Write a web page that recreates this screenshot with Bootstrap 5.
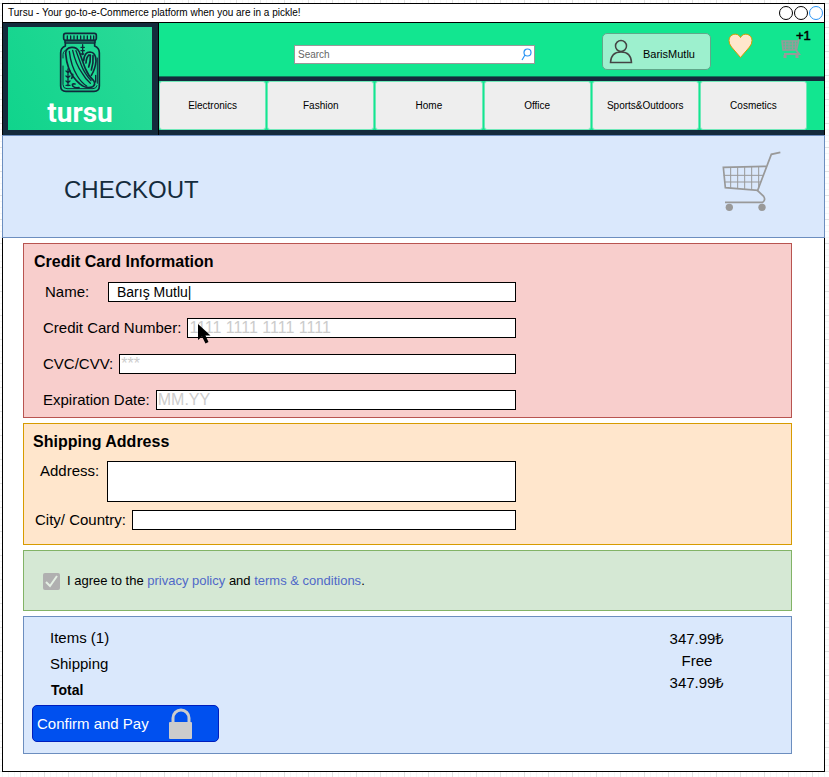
<!DOCTYPE html>
<html lang="en">
<head>
<meta charset="utf-8">
<meta name="viewport" content="width=device-width, initial-scale=1">
<title>Tursu - Checkout</title>
<link href="https://cdn.jsdelivr.net/npm/bootstrap@5.3.0/dist/css/bootstrap.min.css" rel="stylesheet">
<style>
:root { --navy: #142b3c; --mint: #12e690; --sky: #dae8fc; --sky-line: #6c8ebf; }
body {
  font-family: "Liberation Sans", Arial, sans-serif; font-size: 15px; line-height: 20px; color: #000;
  padding: 3px 4px 5px 2px;
  background-color: #fff;
  background-image:
    linear-gradient(#e2e2e2 1px, transparent 1px), linear-gradient(90deg, #e2e2e2 1px, transparent 1px),
    linear-gradient(#f6f6f6 1px, transparent 1px), linear-gradient(90deg, #f6f6f6 1px, transparent 1px);
  background-size: 24px 24px, 24px 24px, 6px 6px, 6px 6px;
  background-position: 20px 3px;
}
svg { display: block; flex: none; }
a { text-decoration: none; }
.window { border: 1px solid #000; background: #fff; }
.titlebar { height: 19px; border-bottom: 1px solid #000; padding: 0 1px 0 5px; }
.titlebar h1 { font-size: 10px; line-height: 18px; margin: 0; font-weight: 400; }
.dots { gap: 1px; }
.dot { width: 14px; height: 14px; border: 1px solid #000; border-radius: 50%; background: #fff; padding: 0; }
.dot-blue { border-color: #2a94f4; }
.masthead { background: var(--navy); }
.brand { width: 156px; padding: 4px 6px 5px 5px; border-right: 1px solid #000; }
.brand-tile { height: 103px; background: linear-gradient(60deg, #10d48c, #2bda98); padding-top: 5px; color: #fff; }
.brand-name { font-family: Roboto, sans-serif; font-weight: 700; font-size: 28px; line-height: 40px; }
.topbar { height: 54px; background: var(--mint); border-bottom: 1px solid #0f7a5c; padding: 10px 8px 0 135px; }
.search { height: 19px; border: 1px solid #999; background: #fff; margin: 12px 67px 0 0; padding: 0 2px 0 3px; }
.search input { font-size: 10px; line-height: 17px; border: 0; padding: 0; outline: 0; background: none; min-width: 0; color: #666; }
.search input::placeholder { color: #666; opacity: 1; }
.search button { border: 0; background: none; padding: 0; }
.account { width: 109px; height: 37px; border: 1px solid #5fa88a; border-radius: 5px; background: #9df0ce; font-size: 11px; padding: 0 0 0 6px; gap: 10px; color: #000; }
.account span { margin-top: 4px; }
.heart { margin-left: 17px; }
.basket { position: relative; margin: 4px 0 0 28px; width: 35px; }
.basket span { position: absolute; left: 15px; top: -9px; font-size: 13px; line-height: 15px; color: #000; -webkit-text-stroke: .5px #000; }
.tabs { background: var(--mint); margin: 4px 0 5px; padding-right: 17px; height: 49px; gap: 1px; }
.tabs a { flex: 1 1 0; background: #eee; border: 1px solid #6fe8b8; border-radius: 3px; font-size: 10px; color: #000; }
.hero { background: var(--sky); border: 1px solid var(--sky-line); margin: 0 -1px; height: 103px; padding: 14px 42px 0 61px; color: var(--navy); }
.hero h2 { font-size: 24px; line-height: 30px; margin: 25px 0 0; font-weight: 400; }
.panels { padding: 5px 32px 17px 20px; gap: 5px; }
.panel { border: 1px solid; }
.panel h3 { font-size: 16px; line-height: 20px; font-weight: 700; margin: 0; }
.panel-pay { background: #f8cecc; border-color: #b85450; padding: 8px 0 7px; }
.panel-pay h3 { padding-left: 10px; }
.panel-ship { background: #ffe6cc; border-color: #d79b00; padding: 8px 0 14px; }
.panel-ship h3 { padding-left: 9px; }
.panel-agree { background: #d5e8d4; border-color: #82b366; padding: 20px 18px 19px; font-size: 13px; }
.panel-sum { background: var(--sky); border-color: var(--sky-line); padding: 8px 0 11px 8px; }
.fields { width: 492px; max-width: 100%; gap: 16px; }
.panel-pay .fields { padding: 10px 0 0 19px; }
.panel-ship .fields { padding: 9px 0 0 11px; gap: 8px; }
.field { gap: 6px; position: relative; }
.field label { white-space: nowrap; }
.label-name { width: 59px; padding-left: 2px; }
.label-address { padding: 0 2px 0 5px; }
.box { flex: 1 1 0; min-width: 0; height: 20px; border: 1px solid #000; background: #fff; padding: 0 1px; font-size: 16px; line-height: 18px; outline: 0; border-radius: 0; resize: none; }
.box::placeholder { color: #ccc; opacity: 1; }
.box-name { font-size: 14px; padding-left: 8px; }
.box-tall { height: 41px; }
.pointer { position: absolute; left: 155px; top: 6px; }
.tick { appearance: none; width: 17px; height: 17px; margin: 0 7px 0 1px; border-radius: 2px; background: #b0b0b0 url("data:image/svg+xml,%3Csvg xmlns='http://www.w3.org/2000/svg' viewBox='0 0 17 17'%3E%3Cpath d='M3 9l4 4 7-10' fill='none' stroke='%23e4f0e3' stroke-width='2'/%3E%3C/svg%3E"); }
.panel-agree a { color: #5068c8; }
.names { line-height: 26px; padding-left: 18px; }
.names strong { font-size: 14px; padding-left: 1px; }
.prices { width: 188px; line-height: 22px; padding-top: 3px; }
.pay { width: 187px; height: 37px; margin-top: 2px; border: 1px solid #001dbc; border-radius: 5px; background: #0050ef; color: #fff; padding: 0 25px 0 4px; }
</style>
<script src="https://cdn.jsdelivr.net/npm/bootstrap@5.3.0/dist/js/bootstrap.bundle.min.js"></script>
</head>
<body>
<div class="window">
  <div class="titlebar d-flex align-items-center justify-content-between">
    <h1>Tursu - Your go-to-e-Commerce platform when you are in a pickle!</h1>
    <div class="dots d-flex">
      <button class="dot" type="button" aria-label="Minimize"></button>
      <button class="dot" type="button" aria-label="Maximize"></button>
      <button class="dot dot-blue" type="button" aria-label="Close"></button>
    </div>
  </div>

  <header class="masthead d-flex">
    <a class="brand d-block flex-shrink-0" href="#">
      <span class="brand-tile d-flex flex-column align-items-center">
        <svg width="42" height="61" viewBox="178 94 126 183" fill="none" stroke="#10293b" stroke-width="5" stroke-linecap="round" stroke-linejoin="round">
          <rect x="192" y="98" width="98" height="21" rx="6"/>
          <path d="M203 106v10M213 106v10M223 106v10M233 106v10M243 106v10M253 106v10M263 106v10M273 106v10M282 106v10" stroke-width="4"/>
          <path d="M196 120h90v7h-90zM197 128v8q-14 6-14 20v100q0 16 16 16h84q16 0 16-16V156q0-14-14-20v-8"/>
          <path d="M190 172v-10q0-12 12-15M293 172v76M190 196v56q0 12 12 12h78q10 0 12-9" stroke-width="3"/>
          <path d="M198 158q0-17 18-18q16-1 23 14l18 50q9 22 25 36q7 12-3 18q-20 8-38-8q-24-20-34-48q-7-18-9-44z"/>
          <path d="M209 152q5 44 24 74q12 20 28 30M219 149q9 42 29 69q10 18 24 30M229 150l16 44q9 24 29 46" stroke-width="4"/>
          <path d="M252 180q2-26 19-26q18 1 18 27q-2 24-14 43M259 187q1-18 9-24M267 199q6-16 5-36M275 208q7-22 5-43M216 233q3-5 3-12M226 250q-12-2-6 7q5 6 18 4"/>
          <path d="M244 140h10M244 150h10M244 160h8M249 132v30M199 211l6 5l6-5M199 226l6 5l6-5M199 241l6 5l6-5M205 205v50M199 254h12M288 224v20" stroke-width="4"/>
        </svg>
        <span class="brand-name">tursu</span>
      </span>
    </a>
    <div class="flex-grow-1">
      <div class="topbar d-flex align-items-start">
        <form class="search d-flex align-items-center flex-grow-1" role="search">
          <input class="flex-grow-1" type="search" placeholder="Search" aria-label="Search">
          <button type="button" aria-label="Go">
            <svg width="11" height="13" viewBox="0 0 11 13" fill="none" stroke="#2a94f4" stroke-width="1.2"><circle cx="6.500" cy="4.500" r="3.500"/><path d="M4 7L1 12"/></svg>
          </button>
        </form>
        <button class="account d-flex align-items-center" type="button">
          <svg width="24" height="25" viewBox="0 0 24 25" fill="none" stroke="#444" stroke-width="1.5"><circle cx="12" cy="7" r="5.500"/><path d="M1.500 23.500Q2 13 12 13T22.500 23.500z"/></svg>
          <span>BarisMutlu</span>
        </button>
        <a class="heart" href="#" aria-label="Favourites">
          <svg width="25" height="26" viewBox="0 0 25 26"><path d="M12.500 24.500L3.500 14Q1 11 1 7.500C1 .500 10-1 12.500 4.500C15-1 24 .500 24 7.500Q24 11 21.500 14z" fill="#ffe6cc" stroke="#d79b00"/></svg>
        </a>
        <a class="basket" href="#" aria-label="Basket, 1 item">
          <svg width="21" height="22" viewBox="0 0 21 22" fill="none" stroke="#999"><path d="M1 4H17L15.500 13H2z" fill="#999" fill-opacity=".45" stroke="none"/><path d="M20 1L18 2L15.500 13H2L1 4H17" stroke-width="1.500"/><path d="M1 7h16M2 10h14M4.500 4v9M8 4v9M11.500 4v9M14.500 4v9"/><path d="M15 13L18 17H3" stroke-width="2"/><path d="M4 18v3M16 18v3" stroke-width="3"/></svg>
          <span>+1</span>
        </a>
      </div>
      <nav class="tabs d-flex" aria-label="Categories">
        <a class="d-flex align-items-center justify-content-center" href="#">Electronics</a>
        <a class="d-flex align-items-center justify-content-center" href="#">Fashion</a>
        <a class="d-flex align-items-center justify-content-center" href="#">Home</a>
        <a class="d-flex align-items-center justify-content-center" href="#">Office</a>
        <a class="d-flex align-items-center justify-content-center" href="#">Sports&amp;Outdoors</a>
        <a class="d-flex align-items-center justify-content-center" href="#">Cosmetics</a>
      </nav>
    </div>
  </header>

  <div class="hero d-flex justify-content-between align-items-start">
    <h2>CHECKOUT</h2>
    <svg width="60" height="62" viewBox="98 44 180 186" fill="none" stroke="#999" stroke-width="5">
      <path d="M273 51L246 57L205 165L108 157L102 96L230 93"/>
      <path d="M103 120H222M106 140H214M124 96V158M145 96V160M166 95V162M187 94V163M208 94V160" stroke-width="3"/>
      <path d="M204 165L223 183Q230 194 220 201H107"/>
      <circle cx="120" cy="216" r="11" fill="#999" stroke="none"/><circle cx="218" cy="216" r="11" fill="#999" stroke="none"/>
    </svg>
  </div>

  <main class="panels d-flex flex-column">
    <section class="panel panel-pay">
      <h3>Credit Card Information</h3>
      <div class="fields d-flex flex-column">
        <div class="field d-flex"><label class="label-name" for="name">Name:</label><input class="box box-name" id="name" type="text" value="Barış Mutlu|"></div>
        <div class="field d-flex"><label for="number">Credit Card Number:</label><input class="box" id="number" type="text" placeholder="1111 1111 1111 1111">
          <svg class="pointer" width="13" height="20" viewBox="0 0 13 20"><path d="M0 0V16L4 12.500L7.500 19.500L10.500 18L7.500 11.500H12.500z"/></svg>
        </div>
        <div class="field d-flex"><label for="cvc">CVC/CVV:</label><input class="box" id="cvc" type="text" placeholder="***"></div>
        <div class="field d-flex"><label for="expiry">Expiration Date:</label><input class="box" id="expiry" type="text" placeholder="MM.YY"></div>
      </div>
    </section>

    <section class="panel panel-ship">
      <h3>Shipping Address</h3>
      <div class="fields d-flex flex-column">
        <div class="field d-flex"><label class="label-address" for="address">Address:</label><textarea class="box box-tall" id="address"></textarea></div>
        <div class="field d-flex"><label for="city">City/ Country:</label><input class="box" id="city" type="text"></div>
      </div>
    </section>

    <section class="panel panel-agree d-flex align-items-center">
      <input class="tick" id="agree" type="checkbox" checked>
      <label for="agree">I agree to the <a href="#">privacy policy</a> and <a href="#">terms &amp; conditions</a>.</label>
    </section>

    <section class="panel panel-sum">
      <div class="d-flex justify-content-between">
        <div class="names d-flex flex-column"><span>Items (1)</span><span>Shipping</span><strong>Total</strong></div>
        <div class="prices d-flex flex-column text-center"><span>347.99₺</span><span>Free</span><span>347.99₺</span></div>
      </div>
      <button class="pay d-flex align-items-center justify-content-between" type="button">
        Confirm and Pay
        <svg width="24" height="32" viewBox="0 0 24 32"><path d="M4 16V10a8 8 0 0 1 16 0v6" fill="none" stroke="#ccc" stroke-width="3"/><rect y="14" width="23" height="17" rx="1" fill="#ccc"/></svg>
      </button>
    </section>
  </main>
</div>
</body>
</html>
